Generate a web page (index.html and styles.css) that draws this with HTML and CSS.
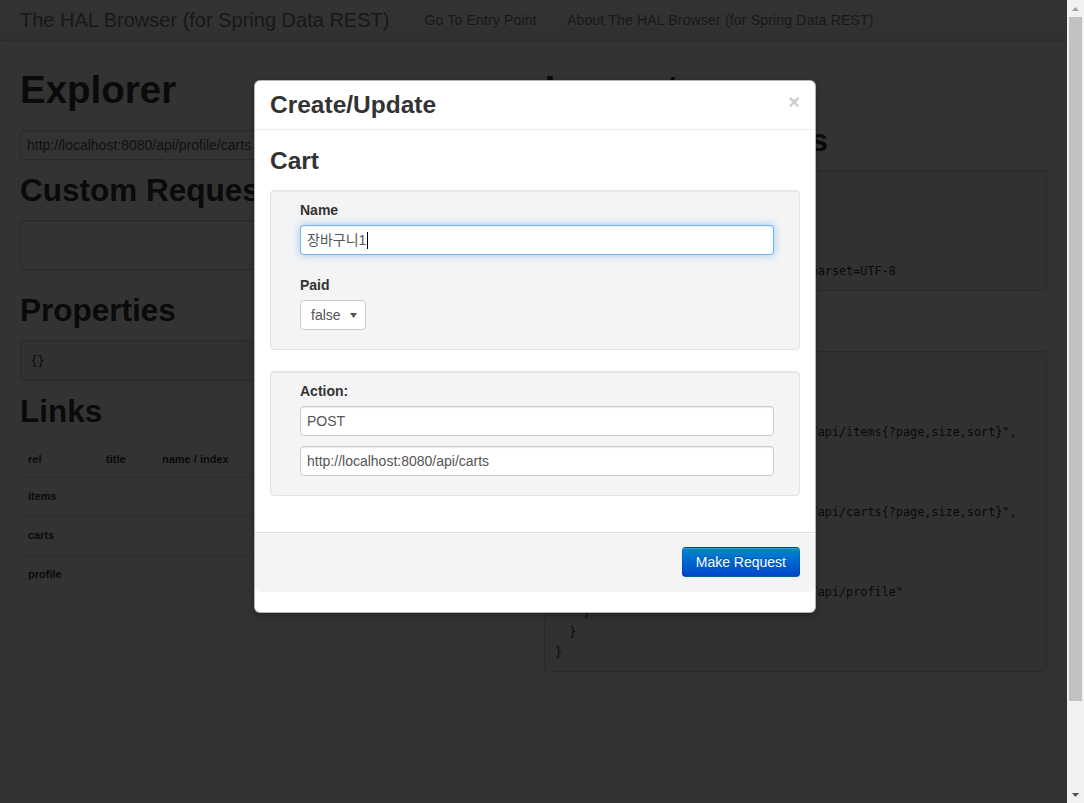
FILE: index.html
```html
<!DOCTYPE html>
<html lang="en">
<head>
<meta charset="utf-8">
<title>The HAL Browser (for Spring Data REST)</title>
<link rel="stylesheet" href="styles.css">
</head>
<body>
<div class="window">
  <div class="viewport">
    <div class="navbar">
      <a class="brand" href="#">The HAL Browser (for Spring Data REST)</a>
      <ul class="nav">
        <li><a href="#">Go To Entry Point</a></li>
        <li><a href="#">About The HAL Browser (for Spring Data REST)</a></li>
      </ul>
    </div>

    <div class="container">
      <div class="col">
        <h1>Explorer</h1>
        <form class="address">
          <input class="address-input" type="text" value="http://localhost:8080/api/profile/carts">
        </form>
        <h2>Custom Request Headers</h2>
        <textarea class="headers-input"></textarea>
        <h2>Properties</h2>
        <pre class="code">{}</pre>
        <h2>Links</h2>
        <table class="links">
          <thead>
            <tr>
              <th class="c-rel">rel</th>
              <th class="c-title">title</th>
              <th class="c-name">name / index</th>
              <th class="c-docs">docs</th>
              <th class="c-get">GET</th>
              <th class="c-nonget">NON-GET</th>
            </tr>
          </thead>
          <tbody>
            <tr><td>items</td><td></td><td></td><td></td><td><span class="btn-mini">&rarr;</span></td><td><span class="btn-mini">!</span></td></tr>
            <tr><td>carts</td><td></td><td></td><td></td><td><span class="btn-mini">&rarr;</span></td><td><span class="btn-mini">!</span></td></tr>
            <tr><td>profile</td><td></td><td></td><td></td><td><span class="btn-mini">&rarr;</span></td><td><span class="btn-mini">!</span></td></tr>
          </tbody>
        </table>
      </div>

      <div class="col">
        <h1>Inspector</h1>
        <h2>Response Headers</h2>
        <pre class="code">200 OK
Date: Sat, 22 Jul 2017 05:29:32 GMT
Transfer-Encoding: chunked
X-Application-Context: application
Content-Type: application/hal+json;charset=UTF-8</pre>
        <h2>Response Body</h2>
        <pre class="code">{
  "_links": {
    "items": {
      "href": "http://localhost:8080/api/items{?page,size,sort}",
      "templated": true
    },
    "carts": {
      "href": "http://localhost:8080/api/carts{?page,size,sort}",
      "templated": true
    },
    "profile": {
      "href": "http://localhost:8080/api/profile"
    }
  }
}</pre>
      </div>
    </div>

    <div class="backdrop"></div>

    <div class="modal">
      <div class="modal-header">
        <h3>Create/Update</h3>
        <button class="close" type="button">&times;</button>
      </div>
      <div class="modal-body">
        <h3 class="schema-title">Cart</h3>
        <div class="well well-first">
          <div class="control-group">
            <label class="field-label">Name</label>
            <div class="text-input focused"><span>장바구니1</span><span class="caret-line"></span></div>
          </div>
          <label class="field-label">Paid</label>
          <div class="select-wrap">
            <select class="select">
              <option>false</option>
              <option>true</option>
            </select>
            <svg class="select-arrow" width="7" height="5" viewBox="0 0 7 5"><path d="M0 0 H7 L3.5 5 Z" fill="#555"/></svg>
          </div>
        </div>
        <div class="well">
          <label class="field-label">Action:</label>
          <input class="text-input" type="text" value="POST">
          <input class="text-input" type="text" value="http://localhost:8080/api/carts">
        </div>
      </div>
      <div class="modal-footer">
        <button class="btn-primary" type="button">Make Request</button>
      </div>
    </div>
  </div>

  <div class="scrollbar">
    <div class="sb-btn">
      <svg width="7" height="4" viewBox="0 0 7 4"><path d="M0 4 L3.5 0 L7 4 Z" fill="#a3a3a3"/></svg>
    </div>
    <div class="sb-track"><div class="sb-thumb"></div></div>
    <div class="sb-btn">
      <svg width="7" height="4" viewBox="0 0 7 4"><path d="M0 0 H7 L3.5 4 Z" fill="#505050"/></svg>
    </div>
  </div>
</div>
</body>
</html>
```

FILE: styles.css
```css
* { box-sizing: border-box; }

html, body {
  margin: 0;
  height: 100%;
}

body {
  font-family: "Liberation Sans", Arial, "Noto Sans CJK KR", sans-serif;
  font-size: 14px;
  line-height: 20px;
  color: #333;
  background: #fff;
  overflow: hidden;
}

.window {
  display: flex;
  height: 803px;
}

.viewport {
  position: relative;
  flex: 1;
  min-width: 0;
  overflow: hidden;
  background: #fff;
}

/* ---------- navbar ---------- */
.navbar {
  height: 41px;
  display: flex;
  align-items: flex-start;
  padding: 0 20px;
  background: linear-gradient(to bottom, #ffffff, #f2f2f2);
  border-bottom: 1px solid #d4d4d4;
  box-shadow: 0 1px 4px rgba(0, 0, 0, 0.065);
}

.brand {
  margin-left: -20px;
  padding: 10px 20px;
  font-size: 20px;
  line-height: 20px;
  font-weight: 200;
  color: #777;
  text-decoration: none;
  text-shadow: 0 1px 0 #fff;
}

.nav {
  display: flex;
  list-style: none;
  margin: 0;
  padding: 0;
}

.nav a {
  display: block;
  padding: 10px 15px;
  color: #777;
  letter-spacing: 0.18px;
  text-decoration: none;
  text-shadow: 0 1px 0 #fff;
}

/* ---------- layout ---------- */
.container {
  display: grid;
  grid-template-columns: 1fr 1fr;
  column-gap: 21.85px;
  padding: 19px 20px 0;
}

.col {
  min-width: 0;
}

h1, h2, h3 {
  font-weight: bold;
  color: #333;
  margin: 10px 0;
  line-height: 40px;
}

h1 { font-size: 38.5px; }
h2 { font-size: 31.5px; }
h3 { font-size: 24.5px; }

.address {
  margin: 20px 0 0;
}

.address-input,
.headers-input,
.text-input {
  font-family: "Liberation Sans", Arial, "Noto Sans CJK KR", sans-serif;
  font-size: 14px;
  line-height: 20px;
  color: #555;
  background: #fff;
  border: 1px solid #ccc;
  border-radius: 4px;
  box-shadow: inset 0 1px 1px rgba(0, 0, 0, 0.075);
  padding: 4px 6px;
}

.address-input {
  display: block;
  width: 460px;
  height: 30px;
  margin-bottom: 10px;
}

.headers-input {
  display: block;
  width: 100%;
  height: 50px;
  resize: none;
  margin: 0 0 20px;
}

.code {
  margin: 0 0 10px;
  padding: 9.5px;
  font-family: "DejaVu Sans Mono", "Liberation Mono", monospace;
  font-size: 11.8px;
  line-height: 20px;
  color: #333;
  background: #f5f5f5;
  border: 1px solid rgba(0, 0, 0, 0.15);
  border-radius: 4px;
  white-space: pre;
  overflow: hidden;
}

/* ---------- links table ---------- */
.links {
  width: 100%;
  border-collapse: collapse;
  font-size: 11px;
  font-weight: bold;
  margin-bottom: 20px;
}

.links th,
.links td {
  padding: 8px;
  line-height: 20px;
  text-align: left;
  vertical-align: top;
  border-top: 1px solid #ddd;
}

.links thead th {
  border-top: 0;
  vertical-align: bottom;
}

.c-rel { width: 78px; }
.c-title { width: 56px; }
.c-name { width: 130px; }
.c-docs { width: 80px; }

.btn-mini {
  display: inline-block;
  height: 22px;
  padding: 1px 8px;
  border: 1px solid #ccc;
  border-radius: 3px;
  background: #f5f5f5;
  font-size: 11px;
  line-height: 18px;
}

/* ---------- modal ---------- */
.backdrop {
  position: absolute;
  inset: 0;
  background: #000;
  opacity: 0.8;
}

.modal {
  position: absolute;
  top: 80px;
  left: 254px;
  width: 562px;
  background: #fff;
  border: 1px solid rgba(0, 0, 0, 0.3);
  border-radius: 6px;
  box-shadow: 0 3px 7px rgba(0, 0, 0, 0.3);
  padding-bottom: 20px;
}

.modal-header {
  display: flex;
  justify-content: space-between;
  align-items: flex-start;
  padding: 9px 15px;
  border-bottom: 1px solid #eee;
}

.modal-header h3 {
  margin: 0;
  line-height: 30px;
}

.close {
  margin-top: 2px;
  padding: 0;
  border: 0;
  background: none;
  font-family: "Liberation Sans", Arial, sans-serif;
  font-size: 20px;
  font-weight: bold;
  line-height: 20px;
  color: #000;
  opacity: 0.2;
  text-shadow: 0 1px 0 #fff;
}

.modal-body {
  padding: 15px 15px 16px;
}

.schema-title {
  margin: 0 0 15px;
  line-height: 28px;
  padding-top: 2px;
}

.well {
  background: #f4f4f4;
  border: 1px solid #e3e3e3;
  border-radius: 4px;
  box-shadow: inset 0 1px 1px rgba(0, 0, 0, 0.05);
  padding: 9px 19px 9px 29px;
  margin-bottom: 20px;
}

.well-first {
  margin-bottom: 21px;
}

.control-group {
  padding-bottom: 10px;
}

.field-label {
  display: block;
  font-weight: bold;
  color: #333;
  margin-bottom: 5px;
}

.text-input {
  display: block;
  width: 474px;
  height: 30px;
  margin: 0 0 10px;
}

.text-input.focused {
  display: flex;
  align-items: center;
  border-color: rgba(82, 168, 236, 0.8);
  outline: 0;
  box-shadow: inset 0 1px 1px rgba(0, 0, 0, 0.075), 0 0 8px rgba(82, 168, 236, 0.6);
  color: #555;
}

.caret-line {
  width: 1px;
  height: 17px;
  margin-left: 1px;
  background: #000;
}

.select-wrap {
  display: flex;
  align-items: center;
  width: 66px;
  height: 30px;
  margin-bottom: 10px;
  padding: 0 8px 0 0;
  background: #fff;
  border: 1px solid #ccc;
  border-radius: 4px;
}

.select {
  appearance: none;
  -webkit-appearance: none;
  flex: 1;
  min-width: 0;
  border: 0;
  background: transparent;
  padding: 0 0 0 10px;
  font-family: "Liberation Sans", Arial, sans-serif;
  font-size: 14px;
  line-height: 20px;
  color: #555;
}

.select-arrow {
  flex: none;
}

.modal-footer {
  padding: 14px 15px 15px;
  text-align: right;
  background: #f4f4f4;
  border-top: 1px solid #ddd;
  border-radius: 0 0 6px 6px;
  box-shadow: inset 0 1px 0 #fff;
}

.btn-primary {
  display: inline-block;
  padding: 4px 13px;
  font-family: "Liberation Sans", Arial, sans-serif;
  font-size: 14px;
  line-height: 20px;
  color: #fff;
  text-shadow: 0 -1px 0 rgba(0, 0, 0, 0.25);
  background: #006dcc linear-gradient(to bottom, #0088cc, #0044cc);
  border: 1px solid;
  border-color: rgba(0, 0, 0, 0.1) rgba(0, 0, 0, 0.1) rgba(0, 0, 0, 0.25);
  border-radius: 4px;
  box-shadow: inset 0 1px 0 rgba(255, 255, 255, 0.2), 0 1px 2px rgba(0, 0, 0, 0.05);
}

/* ---------- scrollbar ---------- */
.scrollbar {
  width: 17px;
  flex: none;
  display: flex;
  flex-direction: column;
  background: #f1f1f1;
}

.sb-btn {
  height: 17px;
  display: flex;
  align-items: center;
  justify-content: center;
}

.sb-track {
  flex: 1;
  padding: 0 2px;
}

.sb-thumb {
  height: 684px;
  background: #c1c1c1;
}
```
